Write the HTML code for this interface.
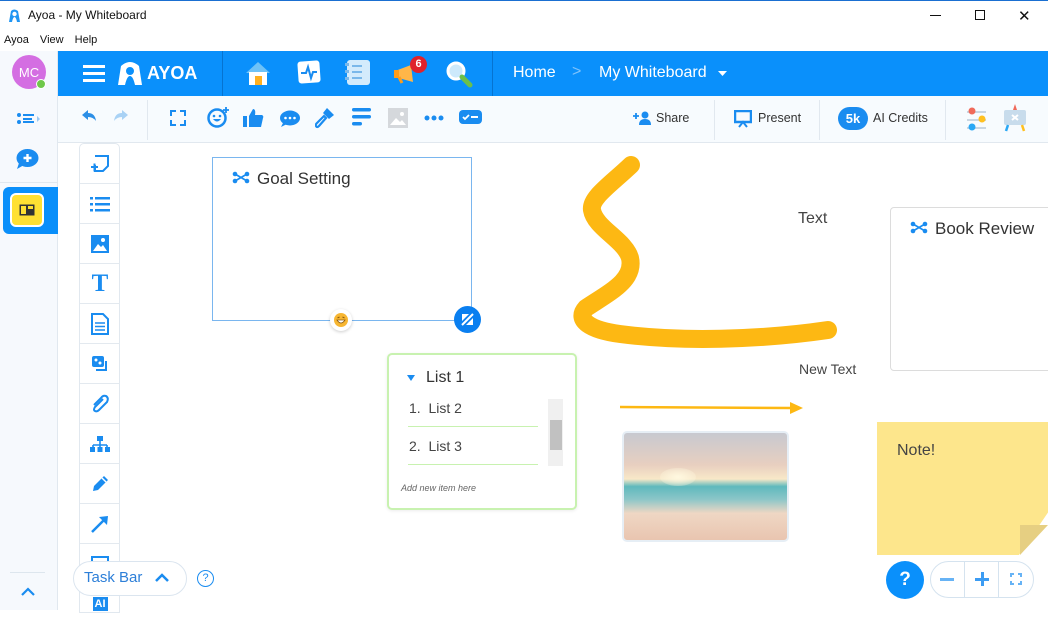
<!DOCTYPE html>
<html><head><meta charset="utf-8"><style>
*{margin:0;padding:0;box-sizing:border-box}
body{width:1048px;height:610px;overflow:hidden;position:relative;background:#fff;font-family:"Liberation Sans","DejaVu Sans",sans-serif;color:#333}
.a{position:absolute}
.tb svg{position:absolute}
.cell{position:absolute;left:0;width:40px;height:40px;border-bottom:1px solid #e3e9ef;display:flex;align-items:center;justify-content:center}
</style></head><body>
<div class="a" style="left:0;top:0;width:1048px;height:1px;background:#1a6fd1"></div>
<svg class="a" style="left:7px;top:8px" width="15" height="15" viewBox="0 0 15 15"><path d="M2 14 L4 3 Q7 0 11 3 L13 14 L10 14 Q9 9 7.5 9 Q6 9 5 14Z" fill="#2196f3"/><circle cx="7.5" cy="6" r="2.2" fill="#fff"/></svg>
<div class="a" style="left:28px;top:8px;font-size:12px;color:#111">Ayoa - My Whiteboard</div>
<div class="a" style="left:930px;top:15px;width:11px;height:1px;background:#111"></div>
<div class="a" style="left:975px;top:10px;width:10px;height:10px;border:1px solid #111"></div>
<div class="a" style="left:1018px;top:7px;font-size:15px;color:#111">✕</div>
<div class="a" style="left:4px;top:34px;font-size:11px;color:#111;word-spacing:8px">Ayoa View Help</div>
<div class="a" style="left:0;top:51px;width:58px;height:559px;background:#f6f9fd;border-right:1px solid #e1e8ef"></div>
<div class="a" style="left:12px;top:55px;width:34px;height:34px;border-radius:50%;background:#d46ee2;color:#fff;font-size:13px;display:flex;align-items:center;justify-content:center">MC</div>
<div class="a" style="left:36px;top:79px;width:10px;height:10px;border-radius:50%;background:#6fc84a;border:1.5px solid #fff"></div>
<svg class="a" style="left:16px;top:112px" width="26" height="14"><circle cx="3" cy="3" r="2" fill="#1a8cf0"/><circle cx="3" cy="10" r="2" fill="#1a8cf0"/><rect x="7" y="2" width="11" height="2" fill="#1a8cf0"/><rect x="7" y="6" width="9" height="2" fill="#1a8cf0"/><rect x="7" y="9" width="11" height="2" fill="#1a8cf0"/><path d="M21 4 L24 7 L21 10Z" fill="#9cc9f2"/></svg>
<svg class="a" style="left:15px;top:148px" width="25" height="22"><ellipse cx="12.5" cy="10" rx="11" ry="9" fill="#1a8cf0"/><path d="M4 15 L2 21 L9 17Z" fill="#1a8cf0"/><path d="M12.5 6v8M8.5 10h8" stroke="#fff" stroke-width="2.4"/></svg>
<div class="a" style="left:0;top:182px;width:58px;height:1px;background:#e1e8ef"></div>
<div class="a" style="left:3px;top:187px;width:55px;height:47px;background:#0a8ffa;border-radius:6px 0 0 6px"></div>
<div class="a" style="left:10px;top:193px;width:34px;height:34px;background:#ffe033;border:2px solid #fff;border-radius:6px"></div>
<svg class="a" style="left:19px;top:204px" width="16" height="12"><rect x="0.5" y="0.5" width="15" height="11" fill="#333"/><rect x="2" y="2" width="5" height="8" fill="#ffe033"/><rect x="9" y="2" width="5" height="3" fill="#ffe033"/></svg>
<div class="a" style="left:10px;top:572px;width:35px;height:1px;background:#dde6ee"></div>
<svg class="a" style="left:20px;top:587px" width="16" height="10"><path d="M2 8 L8 2 L14 8" stroke="#1a8cf0" stroke-width="2.2" fill="none"/></svg>
<div class="a" style="left:58px;top:51px;width:990px;height:45px;background:#0a90fb"></div>
<div class="a" style="left:222px;top:51px;width:1px;height:45px;background:#0673d0"></div>
<div class="a" style="left:492px;top:51px;width:1px;height:45px;background:#0673d0"></div>
<svg class="a" style="left:83px;top:65px" width="22" height="17"><rect y="0" width="22" height="3" fill="#fff"/><rect y="7" width="22" height="3" fill="#fff"/><rect y="14" width="22" height="3" fill="#fff"/></svg>
<svg class="a" style="left:117px;top:61px" width="26" height="25" viewBox="0 0 26 25"><path d="M1 24 L4 5 Q13 -3 22 5 L25 24 L18 24 Q16 15 13 15 Q10 15 8 24Z" fill="#fff"/><circle cx="13" cy="10" r="4" fill="#0a90fb"/></svg>
<div class="a" style="left:147px;top:63px;color:#fff;font-size:18px;font-weight:bold">AYOA</div>
<svg class="a" style="left:244px;top:60px" width="28" height="26"><path d="M2 13 L14 2 L26 13Z" fill="#6ec2f7"/><rect x="5" y="12" width="18" height="13" fill="#fff"/><rect x="11" y="16" width="7" height="9" fill="#ffb020"/></svg>
<svg class="a" style="left:296px;top:59px" width="26" height="26"><rect x="2" y="2" width="22" height="22" rx="3" fill="#fff" transform="rotate(-4 13 13)"/><path d="M5 14 L10 14 L12 8 L15 19 L17 13 L21 13" stroke="#1a8cf0" stroke-width="2" fill="none"/></svg>
<svg class="a" style="left:343px;top:58px" width="30" height="28"><rect x="4" y="2" width="23" height="25" rx="3" fill="#d3ebfc"/><rect x="2" y="5" width="4" height="3" fill="#7ab8ea"/><rect x="2" y="12" width="4" height="3" fill="#7ab8ea"/><rect x="2" y="19" width="4" height="3" fill="#7ab8ea"/><path d="M9 8h10M9 14h10M9 20h10" stroke="#7ab8ea" stroke-width="2"/></svg>
<svg class="a" style="left:393px;top:62px" width="28" height="24"><path d="M2 9 L18 3 L20 20 L2 15Z" fill="#ffb648"/><rect x="1" y="8" width="5" height="8" fill="#ff9c1a"/><path d="M6 15 L9 21" stroke="#ff9c1a" stroke-width="3"/></svg>
<div class="a" style="left:410px;top:56px;width:17px;height:17px;border-radius:50%;background:#e0222c;color:#fff;font-size:11px;font-weight:bold;text-align:center;line-height:17px">6</div>
<svg class="a" style="left:445px;top:60px" width="28" height="28"><circle cx="11" cy="11" r="8" fill="#cde9fb" stroke="#fff" stroke-width="3"/><path d="M17 17 L25 25" stroke="#6cc04a" stroke-width="5" stroke-linecap="round"/></svg>
<div class="a" style="left:513px;top:64px;color:#fff;font-size:16px">Home</div>
<div class="a" style="left:572px;top:63px;color:#7fc3fb;font-size:16px">&gt;</div>
<div class="a" style="left:599px;top:64px;color:#fff;font-size:16px">My Whiteboard</div>
<svg class="a" style="left:718px;top:71px" width="9" height="5"><path d="M0 0 L9 0 L4.5 5Z" fill="#fff"/></svg>
<div class="a" style="left:58px;top:96px;width:990px;height:47px;background:#f7fbfe;border-bottom:1px solid #e1e8ef"></div>
<svg class="a" style="left:80px;top:109px" width="50" height="16"><path d="M2 6 L8 1 L8 4 Q15 4 16 12 Q13 8 8 8 L8 11Z" fill="#2c8fe6"/><path d="M48 6 L42 1 L42 4 Q35 4 34 12 Q37 8 42 8 L42 11Z" fill="#a9d2f5"/></svg>
<div class="a" style="left:147px;top:100px;width:1px;height:40px;background:#e1e8ef"></div>
<div class="a" style="left:170px;top:110px;width:16px;height:16px;border:2px dashed #1a8cf0"></div>
<svg class="a" style="left:206px;top:106px" width="24" height="22"><circle cx="11" cy="12" r="8.5" fill="none" stroke="#1a8cf0" stroke-width="2.5"/><path d="M7 13 Q11 18 15 13Z" fill="#1a8cf0"/><circle cx="8" cy="10" r="1.3" fill="#1a8cf0"/><circle cx="14" cy="10" r="1.3" fill="#1a8cf0"/><path d="M20 1v6M17 4h6" stroke="#1a8cf0" stroke-width="1.8"/></svg>
<svg class="a" style="left:243px;top:108px" width="22" height="20"><rect x="0" y="8" width="4" height="11" fill="#1a8cf0"/><path d="M6 8 L10 1 Q13 1 12 7 L19 7 Q21 8 20 10 L18 19 L6 19Z" fill="#1a8cf0"/></svg>
<svg class="a" style="left:279px;top:110px" width="22" height="18"><ellipse cx="11" cy="8" rx="10" ry="7.5" fill="#1a8cf0"/><path d="M4 13 L2 17 L8 14Z" fill="#1a8cf0"/><circle cx="6.5" cy="8" r="1.3" fill="#fff"/><circle cx="11" cy="8" r="1.3" fill="#fff"/><circle cx="15.5" cy="8" r="1.3" fill="#fff"/></svg>
<svg class="a" style="left:315px;top:107px" width="20" height="22"><path d="M12 1 L19 8 L14 12 L8 6Z" fill="#1a8cf0"/><path d="M9 9 L11 11 L4 19 Q2 21 1 19 Q0 18 2 16Z" fill="none" stroke="#1a8cf0" stroke-width="2.2"/></svg>
<svg class="a" style="left:352px;top:108px" width="20" height="19"><rect y="0" width="19" height="3.5" rx="1.7" fill="#1a8cf0"/><rect y="7" width="19" height="3.5" rx="1.7" fill="#1a8cf0"/><rect y="14" width="10" height="3.5" rx="1.7" fill="#1a8cf0"/></svg>
<svg class="a" style="left:388px;top:108px" width="20" height="20"><rect width="20" height="20" fill="#d5d8dc"/><path d="M2 17 L8 10 L12 14 L14 12 L18 17Z" fill="#fff"/><circle cx="14" cy="6" r="2" fill="#fff"/></svg>
<svg class="a" style="left:424px;top:115px" width="20" height="6"><circle cx="3" cy="3" r="2.5" fill="#1a8cf0"/><circle cx="10" cy="3" r="2.5" fill="#1a8cf0"/><circle cx="17" cy="3" r="2.5" fill="#1a8cf0"/></svg>
<svg class="a" style="left:459px;top:110px" width="23" height="14"><rect width="23" height="14" rx="4" fill="#1a8cf0"/><path d="M4 7 L6 9 L10 5" stroke="#fff" stroke-width="1.8" fill="none"/><rect x="12" y="6" width="7" height="2" fill="#fff"/></svg>
<svg class="a" style="left:633px;top:111px" width="18" height="14"><path d="M0 5h6M3 2v6" stroke="#1a8cf0" stroke-width="1.8"/><circle cx="12" cy="4" r="3.5" fill="#1a8cf0"/><path d="M6 14 Q6 8 12 8 Q18 8 18 14Z" fill="#1a8cf0"/></svg>
<div class="a" style="left:656px;top:111px;font-size:12.5px;color:#333">Share</div>
<div class="a" style="left:714px;top:100px;width:1px;height:40px;background:#e1e8ef"></div>
<svg class="a" style="left:734px;top:110px" width="18" height="18"><rect x="1" y="1" width="16" height="11" fill="none" stroke="#1a8cf0" stroke-width="2.5"/><path d="M5 17 L9 12 L13 17" stroke="#1a8cf0" stroke-width="2" fill="none"/></svg>
<div class="a" style="left:758px;top:111px;font-size:12.5px;color:#333">Present</div>
<div class="a" style="left:819px;top:100px;width:1px;height:40px;background:#e1e8ef"></div>
<div class="a" style="left:838px;top:107px;width:30px;height:23px;border-radius:12px;background:#1a8cf0;color:#fff;font-size:13px;font-weight:bold;text-align:center;line-height:23px">5k</div>
<div class="a" style="left:873px;top:111px;font-size:12.5px;color:#333">AI Credits</div>
<div class="a" style="left:945px;top:100px;width:1px;height:40px;background:#e1e8ef"></div>
<svg class="a" style="left:965px;top:106px" width="24" height="26"><rect x="2" y="5" width="19" height="2" fill="#c9d6e2"/><rect x="2" y="13" width="19" height="2" fill="#c9d6e2"/><rect x="2" y="21" width="19" height="2" fill="#c9d6e2"/><circle cx="7" cy="5" r="3.5" fill="#f06a5a"/><circle cx="17" cy="13" r="3.5" fill="#ffc020"/><circle cx="7" cy="21" r="3.5" fill="#2aa8f5"/></svg>
<svg class="a" style="left:1003px;top:104px" width="24" height="28"><rect x="1" y="6" width="22" height="15" rx="2" fill="#c8dcec"/><path d="M12 0 L14 6 L10 6Z" fill="#f06a5a"/><path d="M5 21 L3 27" stroke="#2aa8f5" stroke-width="2.5"/><path d="M19 21 L21 27" stroke="#ffc020" stroke-width="2.5"/><path d="M9 11 L15 16 M15 11 L9 16" stroke="#fff" stroke-width="2"/></svg>
<div class="a tb" style="left:79px;top:143px;width:41px;height:470px;background:#fff;border:1px solid #e1e8ef;border-radius:5px 5px 0 0">
<div class="cell" style="top:0"><svg width="20" height="20"><path d="M5 2h13v10l-5 5H5v-6" fill="none" stroke="#1a8cf0" stroke-width="2"/><path d="M1 13h7M4.5 9.5v8" stroke="#1a8cf0" stroke-width="2"/></svg></div>
<div class="cell" style="top:40px"><svg width="20" height="16"><rect y="1" width="3" height="2.5" fill="#1a8cf0"/><rect y="7" width="3" height="2.5" fill="#1a8cf0"/><rect y="13" width="3" height="2.5" fill="#1a8cf0"/><rect x="5" y="1" width="15" height="2.5" fill="#1a8cf0"/><rect x="5" y="7" width="15" height="2.5" fill="#1a8cf0"/><rect x="5" y="13" width="15" height="2.5" fill="#1a8cf0"/></svg></div>
<div class="cell" style="top:80px"><svg width="18" height="18"><rect width="18" height="18" fill="#1a8cf0"/><path d="M2 16 L7 9 L10 12 L12 10 L16 16Z" fill="#fff"/><circle cx="12" cy="5" r="2" fill="#fff"/></svg></div>
<div class="cell" style="top:120px"><span style="font-family:'Liberation Serif',serif;font-weight:bold;font-size:25px;color:#1a8cf0">T</span></div>
<div class="cell" style="top:160px"><svg width="18" height="22"><path d="M1 1h11l5 5v15H1Z" fill="none" stroke="#1a8cf0" stroke-width="2"/><path d="M4 10h10M4 13.5h10M4 17h10" stroke="#1a8cf0" stroke-width="1.6"/></svg></div>
<div class="cell" style="top:200px"><svg width="18" height="18"><rect x="1" y="1" width="12" height="11" rx="2" fill="#1a8cf0"/><path d="M15 6v9H5" stroke="#1a8cf0" stroke-width="2" fill="none"/><circle cx="5" cy="5" r="1.5" fill="#fff"/><circle cx="9" cy="8" r="1.5" fill="#fff"/></svg></div>
<div class="cell" style="top:240px"><svg width="20" height="20"><path d="M13 5 L5 13 Q3 16 5 17 Q7 18 9 16 L17 8 Q19 4 16 2 Q13 1 11 4 L4 11" fill="none" stroke="#1a8cf0" stroke-width="2"/></svg></div>
<div class="cell" style="top:280px"><svg width="20" height="16"><rect x="7" y="0" width="6" height="5" fill="#1a8cf0"/><path d="M10 5v4M3 9h14M3 9v2M10 9v2M17 9v2" stroke="#1a8cf0" stroke-width="1.6"/><rect x="0" y="11" width="5" height="5" fill="#1a8cf0"/><rect x="7.5" y="11" width="5" height="5" fill="#1a8cf0"/><rect x="15" y="11" width="5" height="5" fill="#1a8cf0"/></svg></div>
<div class="cell" style="top:320px"><svg width="20" height="20"><path d="M3 17 L4 12 L14 2 L18 6 L8 16Z" fill="#1a8cf0"/><path d="M12 4 L16 8" stroke="#fff" stroke-width="1.4"/></svg></div>
<div class="cell" style="top:360px"><svg width="20" height="20"><path d="M2 18 L16 4" stroke="#1a8cf0" stroke-width="2.5"/><path d="M9 3 L18 2 L17 11Z" fill="#1a8cf0"/></svg></div>
<div class="cell" style="top:400px"><svg width="18" height="16"><rect x="1" y="1" width="16" height="14" fill="none" stroke="#1a8cf0" stroke-width="2"/></svg></div>
<div class="cell" style="top:440px;border:none"><div style="background:#1a8cf0;color:#fff;font-size:11px;font-weight:bold;padding:1px 2px">AI</div></div>
</div>
<div class="a" style="left:73px;top:561px;width:114px;height:35px;border-radius:18px;background:#fff;border:1px solid #dbe5ef"></div>
<div class="a" style="left:84px;top:569px;font-size:15px;color:#2d7fd8">Task Bar</div>
<svg class="a" style="left:154px;top:573px" width="16" height="10"><path d="M2 8 L8 2 L14 8" stroke="#1a8cf0" stroke-width="2.5" fill="none"/></svg>
<div class="a" style="left:197px;top:570px;width:17px;height:17px;border-radius:50%;border:1.5px solid #1a8cf0;color:#1a8cf0;font-size:11px;text-align:center;line-height:14px">?</div>
<div class="a" style="left:212px;top:157px;width:260px;height:164px;border:1.5px solid #7ab6ef;background:#fff"></div>
<svg class="a" style="left:232px;top:171px" width="18" height="13"><path d="M3 3 L15 10 M15 3 L3 10" stroke="#1a8cf0" stroke-width="1.6"/><circle cx="3" cy="3" r="2.3" fill="#1a8cf0"/><circle cx="15" cy="3" r="2.3" fill="#1a8cf0"/><circle cx="3" cy="10" r="2.3" fill="#1a8cf0"/><circle cx="15" cy="10" r="2.3" fill="#1a8cf0"/></svg>
<div class="a" style="left:257px;top:169px;font-size:17px;color:#333">Goal Setting</div>
<div class="a" style="left:330px;top:309px;width:22px;height:22px;border-radius:50%;background:#fff;box-shadow:0 1px 3px rgba(0,0,0,.2)"></div>
<svg class="a" style="left:334px;top:313px" width="14" height="14"><circle cx="7" cy="7" r="7" fill="#f7b632"/><path d="M3 7 Q7 13 11 7Z" fill="#fff" stroke="#8a5a10" stroke-width="0.8"/><path d="M3.5 5 L5.5 4 M10.5 5 L8.5 4" stroke="#8a5a10" stroke-width="1"/></svg>
<div class="a" style="left:454px;top:306px;width:27px;height:27px;border-radius:50%;background:#0a7ff0"></div>
<svg class="a" style="left:461px;top:313px" width="13" height="13"><path d="M1 12 L12 1" stroke="#fff" stroke-width="2"/><path d="M1 1h7L1 8Z M12 12H5l7-7Z" fill="#fff"/></svg>
<div class="a" style="left:387px;top:353px;width:190px;height:157px;border:2px solid #c8f2b0;border-radius:5px;background:#fff;box-shadow:0 1px 3px rgba(0,0,0,.08)"></div>
<svg class="a" style="left:407px;top:375px" width="8" height="7"><path d="M0 0h8L4 6Z" fill="#1a8cf0"/></svg>
<div class="a" style="left:426px;top:369px;font-size:16px;color:#333">List 1</div>
<div class="a" style="left:409px;top:400px;font-size:14px;color:#444">1.&nbsp;&nbsp;List 2</div>
<div class="a" style="left:408px;top:426px;width:130px;height:1px;background:#c8f2b0"></div>
<div class="a" style="left:409px;top:438px;font-size:14px;color:#444">2.&nbsp;&nbsp;List 3</div>
<div class="a" style="left:408px;top:464px;width:130px;height:1px;background:#c8f2b0"></div>
<div class="a" style="left:548px;top:399px;width:15px;height:67px;background:#f0f0f0"></div>
<div class="a" style="left:550px;top:420px;width:12px;height:30px;background:#c1c1c1"></div>
<div class="a" style="left:401px;top:483px;font-size:9px;font-style:italic;color:#666">Add new item here</div>
<svg class="a" style="left:0;top:0" width="1048" height="610"><path d="M631 165 C610 185 590 198 592 210 C595 228 625 240 630 258 C635 280 610 292 586 308 C575 320 590 330 620 334 C680 342 760 340 828 330" stroke="#fdb813" stroke-width="18" fill="none" stroke-linecap="round"/>
<path d="M620 407 L792 408" stroke="#fdb813" stroke-width="2.5"/><path d="M790 402 L803 408 L790 414Z" fill="#fdb813"/></svg>
<div class="a" style="left:798px;top:210px;font-size:16px;color:#444">Text</div>
<div class="a" style="left:799px;top:361px;font-size:14px;color:#444">New Text</div>
<div class="a" style="left:890px;top:207px;width:170px;height:164px;border:1px solid #dcdcdc;border-radius:4px;background:#fff"></div>
<svg class="a" style="left:910px;top:221px" width="18" height="13"><path d="M3 3 L15 10 M15 3 L3 10" stroke="#1a8cf0" stroke-width="1.6"/><circle cx="3" cy="3" r="2.3" fill="#1a8cf0"/><circle cx="15" cy="3" r="2.3" fill="#1a8cf0"/><circle cx="3" cy="10" r="2.3" fill="#1a8cf0"/><circle cx="15" cy="10" r="2.3" fill="#1a8cf0"/></svg>
<div class="a" style="left:935px;top:219px;font-size:17px;color:#333">Book Review</div>
<div class="a" style="left:622px;top:431px;width:167px;height:111px;border-radius:5px;border:2px solid #e6eef5;background:linear-gradient(180deg,#c7c9d0 0%,#e8cfc0 30%,#f8e8c8 43%,#5fb9bd 50%,#8cc6c8 62%,#efd7c4 75%,#e9c5b0 100%)"></div>
<div class="a" style="left:660px;top:468px;width:36px;height:18px;border-radius:50%;background:radial-gradient(#fff8e0,rgba(255,240,210,0))"></div>
<div class="a" style="left:877px;top:422px;width:171px;height:133px;background:#fde68c;clip-path:polygon(0 0,100% 0,100% 68%,83% 100%,0 100%)"></div>
<div class="a" style="left:1020px;top:525px;width:28px;height:30px;background:#e6cf82;clip-path:polygon(100% 0,0 100%,0 0)"></div>
<div class="a" style="left:897px;top:442px;font-size:16px;color:#444">Note!</div>
<div class="a" style="left:886px;top:561px;width:38px;height:38px;border-radius:50%;background:#0a90fb;color:#fff;font-size:19px;font-weight:bold;text-align:center;line-height:38px">?</div>
<div class="a" style="left:930px;top:561px;width:104px;height:37px;border-radius:19px;border:1px solid #d5e3ef;background:#fff"></div>
<div class="a" style="left:964px;top:562px;width:1px;height:35px;background:#d5e3ef"></div>
<div class="a" style="left:998px;top:562px;width:1px;height:35px;background:#d5e3ef"></div>
<div class="a" style="left:940px;top:578px;width:14px;height:3px;background:#67b3f5"></div>
<div class="a" style="left:975px;top:578px;width:14px;height:3px;background:#3c9cf3"></div>
<div class="a" style="left:980.5px;top:572px;width:3px;height:14px;background:#3c9cf3"></div>
<svg class="a" style="left:1010px;top:573px" width="12" height="12"><path d="M1 4V1h3M8 1h3v3M11 8v3H8M4 11H1V8" stroke="#67b3f5" stroke-width="2" fill="none"/></svg>
</body></html>
